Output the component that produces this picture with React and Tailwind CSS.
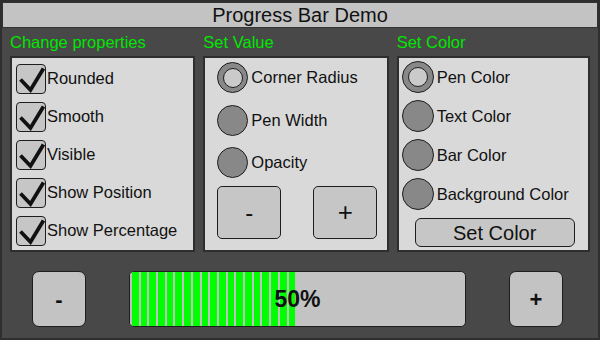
import React from "react";

function Check() {
  return (
    <svg width="29" height="29" viewBox="0 0 29 29" className="absolute left-0 top-0">
      <path d="M3.5 14.5 L13.5 25 L26.5 3.5" fill="none" stroke="#111" strokeWidth="3.8" strokeLinejoin="miter" strokeLinecap="butt" />
    </svg>
  );
}

function CheckRow({ label }) {
  return (
    <div className="flex items-center h-[29px]">
      <div className="relative w-[30px] h-[30px] rounded-[4px] border-[1.5px] border-[#1e1e1e] bg-[#c6c6c6] shrink-0">
        <Check />
      </div>
      <span className="ml-[1px] text-[16.5px] text-[#111]">{label}</span>
    </div>
  );
}

function Radio({ checked, label, size = 31 }) {
  return (
    <div className="flex items-center">
      <div
        className={
          "rounded-full border-[1.5px] border-[#1e1e1e] bg-[#888888] flex items-center justify-center shrink-0 " +
          (size === 31 ? "w-[31px] h-[31px]" : "w-[32px] h-[32px]")
        }
      >
        {checked && <div className="w-[20px] h-[20px] rounded-full border-[1.5px] border-[#1e1e1e] bg-[#cacaca]" />}
      </div>
      <span className="ml-[3px] text-[16.5px] text-[#111]">{label}</span>
    </div>
  );
}

export default function App() {
  return (
    <div className="w-[600px] h-[340px] bg-[#484848] border-2 border-[#2f2f2f] flex flex-col font-['Liberation_Sans',Arial,sans-serif] overflow-hidden">
      <div className="h-[26px] shrink-0 bg-[#c3c3c3] border border-[#333] flex items-center justify-center text-[20px] text-[#111]">
        Progress Bar Demo
      </div>
      <div className="flex gap-2 px-2">
        <div className="flex flex-col w-[186px]">
          <div className="h-[28px] flex items-center text-[16.5px] text-[#00e600]">Change properties</div>
          <div className="h-[196px] border-2 border-[#2e2e2e] bg-[#d9d9d9] flex flex-col gap-[9px] pl-[4px] pt-[6px]">
            <CheckRow label="Rounded" />
            <CheckRow label="Smooth" />
            <CheckRow label="Visible" />
            <CheckRow label="Show Position" />
            <CheckRow label="Show Percentage" />
          </div>
        </div>
        <div className="flex flex-col w-[186px]">
          <div className="h-[28px] flex items-center text-[16.5px] text-[#00e600]">Set Value</div>
          <div className="h-[196px] border-2 border-[#2e2e2e] bg-[#d9d9d9] flex flex-col pl-[12px] pt-[4px]">
            <div className="flex flex-col gap-[11.5px]">
              <Radio checked label="Corner Radius" />
              <Radio label="Pen Width" />
              <Radio label="Opacity" />
            </div>
            <div className="flex gap-[32px] mt-[8px]">
              <div className="w-[64px] h-[53px] rounded-[5px] border-[1.5px] border-[#1e1e1e] bg-[#c6c6c6] flex items-center justify-center text-[24px] text-[#111]">-</div>
              <div className="w-[64px] h-[53px] rounded-[5px] border-[1.5px] border-[#1e1e1e] bg-[#c6c6c6] flex items-center justify-center text-[26px] text-[#111]">+</div>
            </div>
          </div>
        </div>
        <div className="flex flex-col w-[194px]">
          <div className="h-[28px] flex items-center text-[16.5px] text-[#00e600]">Set Color</div>
          <div className="h-[196px] border-2 border-[#2e2e2e] bg-[#d9d9d9] flex flex-col pl-[3px] pt-[3px]">
            <div className="flex flex-col gap-[7px]">
              <Radio checked label="Pen Color" size={32} />
              <Radio label="Text Color" size={32} />
              <Radio label="Bar Color" size={32} />
              <Radio label="Background Color" size={32} />
            </div>
            <div className="ml-[13px] mt-[8px] w-[160px] h-[29px] rounded-[6px] border-[1.5px] border-[#1e1e1e] bg-[#c6c6c6] flex items-center justify-center text-[20px] text-[#111]">
              Set Color
            </div>
          </div>
        </div>
      </div>
      <div className="flex items-center mt-[19px] ml-[30px] gap-[43px]">
        <div className="w-[54px] h-[56px] rounded-[7px] border-[1.5px] border-[#1e1e1e] bg-[#c3c3c3] flex items-center justify-center text-[22px] font-bold text-[#111]">-</div>
        <div className="relative w-[337px] h-[56px] rounded-[5px] border-[1.5px] border-[#1e1e1e] bg-[#c3c3c3] overflow-hidden">
          <div className="absolute left-0 top-0 bottom-0 w-[166px] bg-[repeating-linear-gradient(90deg,#c0c0c0_0px,#c0c0c0_2px,#00ff00_2px,#00ff00_8.7px)]" />
          <div className="absolute inset-0 flex items-center justify-center text-[23px] font-bold text-[#111]">50%</div>
        </div>
        <div className="w-[54px] h-[56px] rounded-[7px] border-[1.5px] border-[#1e1e1e] bg-[#c3c3c3] flex items-center justify-center text-[22px] font-bold text-[#111]">+</div>
      </div>
    </div>
  );
}
